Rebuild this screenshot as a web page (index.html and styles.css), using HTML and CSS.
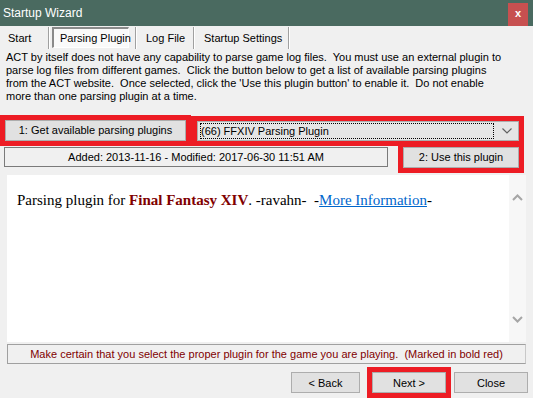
FILE: index.html
```html
<!DOCTYPE html>
<html lang="en">
<head>
  <meta charset="UTF-8" />
  <meta name="viewport" content="width=device-width, initial-scale=1.0" />
  <title>Startup Wizard</title>
  <link rel="stylesheet" href="styles.css">
</head>
<body>
  <div class="window">
    <div class="titlebar">
      <span class="title">Startup Wizard</span>
      <span class="close-btn">x</span>
    </div>

    <!-- TABS -->
    <div class="tabs">
      <div class="tab tab-start">Start</div>
      <div class="tab tab-parsing"><span class="pressed">Parsing Plugin</span></div>
      <div class="tab tab-log">Log File</div>
      <div class="tab tab-settings">Startup Settings</div>
    </div>

    <p class="desc">ACT by itself does not have any capability to parse game log files.&nbsp; You must use an external plugin to<br>
      parse log files from different games.&nbsp; Click the button below to get a list of available parsing plugins<br>
      from the ACT website.&nbsp; Once selected, click the 'Use this plugin button' to enable it.&nbsp; Do not enable<br>
      more than one parsing plugin at a time.</p>

    <div class="row row-get">
      <div class="mark mark-get"><button class="btn btn-get">1: Get available parsing plugins</button></div>
      <div class="mark mark-combo">
        <div class="combo">
          <span class="combo-text">(66) FFXIV Parsing Plugin</span>
          <svg class="combo-arrow" width="10" height="6" viewBox="0 0 10 6"><path d="M0.5 0.5 L5 5 L9.5 0.5" fill="none" stroke="#606060" stroke-width="1.2"/></svg>
        </div>
      </div>
    </div>

    <div class="row row-use">
      <div class="info">Added: 2013-11-16 - Modified: 2017-06-30 11:51 AM</div>
      <div class="mark mark-use"><button class="btn btn-use">2: Use this plugin</button></div>
    </div>

    <!-- PLUGIN INFO -->
    <div class="content">
      <div class="doc">
        Parsing plugin for <b class="game">Final Fantasy XIV</b>. -ravahn- &nbsp;-<a href="#" class="more">More Information</a>-
      </div>
      <div class="scrollbar">
        <svg width="11" height="7" viewBox="0 0 11 7"><path d="M1 6 L5.5 1.5 L10 6" fill="none" stroke="#a6a6a6" stroke-width="2"/></svg>
        <svg width="11" height="7" viewBox="0 0 11 7"><path d="M1 1 L5.5 5.5 L10 1" fill="none" stroke="#a6a6a6" stroke-width="2"/></svg>
      </div>
    </div>

    <div class="note">Make certain that you select the proper plugin for the game you are playing.&nbsp; (Marked in bold red)</div>

    <div class="footer">
      <button class="btn btn-nav">&lt; Back</button>
      <div class="mark mark-next"><button class="btn btn-nav">Next &gt;</button></div>
      <button class="btn btn-nav">Close</button>
    </div>
  </div>
</body>
</html>
```

FILE: styles.css
```css
* {
  box-sizing: border-box;
}

body {
  margin: 0;
  background-color: #f0f0f0;
  font-family: "Liberation Sans", Arial, sans-serif;
  font-size: 11px;
  color: #000;
}

.window {
  width: 533px;
  height: 398px;
  display: flex;
  flex-direction: column;
  overflow: hidden;
}

.titlebar {
  height: 26px;
  background-color: #4a6a60;
  color: #fff;
  display: flex;
  align-items: center;
  justify-content: space-between;
  padding: 0 5px 0 3px;
}

.title {
  font-size: 12px;
}

.close-btn {
  align-self: flex-end;
  width: 20px;
  height: 23px;
  background-color: #c75050;
  color: #fff;
  font-weight: bold;
  font-size: 11px;
  display: flex;
  align-items: center;
  justify-content: center;
  padding-bottom: 3px;
}

/* tabs */
.tabs {
  height: 24px;
  display: flex;
  align-items: center;
  white-space: nowrap;
}

.tab {
  height: 22px;
  display: flex;
  align-items: center;
  padding-left: 8px;
  border-right: 1px solid #a0a0a0;
  box-shadow: 1px 0 0 #fff;
}

.tab-start { width: 49px; }
.tab-parsing { width: 87px; padding-left: 3px; }
.tab-log { width: 58px; padding-left: 10px; }
.tab-settings { width: 95px; padding-left: 10px; }

.pressed {
  height: 21px;
  width: 77px;
  display: flex;
  align-items: center;
  padding-left: 6px;
  background-color: #fafafa;
  border-top: 2px solid #8a8a8a;
  border-left: 2px solid #8a8a8a;
  border-right: 1px solid #fff;
  border-bottom: 1px solid #fff;
}

.desc {
  margin: 1px 0 0;
  padding: 0 6px;
  line-height: 13px;
  height: 64px;
  white-space: nowrap;
}

/* red highlight boxes */
.mark {
  border: 5px solid #ed1c24;
}

.btn {
  font-family: "Liberation Sans", Arial, sans-serif;
  font-size: 11px;
  background-color: #e1e1e1;
  border: 1px solid #adadad;
  color: #000;
  padding: 0;
  height: 21px;
}

.row {
  display: flex;
  align-items: flex-start;
}

.row-get {
  height: 31px;
}

.mark-get {
  width: 191px;
}

.btn-get {
  width: 100%;
}

.mark-combo {
  width: 333px;
  margin-top: 1px;
  border-left-width: 6px;
}

.combo {
  height: 20px;
  background-color: #e5e5e5;
  border: 1px solid #adadad;
  display: flex;
  align-items: center;
  justify-content: space-between;
  padding: 0 6px 0 2px;
}

.combo-text {
  flex: 1;
  border: 1px dotted #000;
  height: 16px;
  line-height: 14px;
  margin-right: 8px;
}

.row-use {
  height: 29px;
}

.info {
  margin: 1px 0 0 4px;
  width: 384px;
  height: 20px;
  border: 1px solid #7a7a7a;
  text-align: center;
  line-height: 18px;
}

.mark-use {
  margin: -4px 0 0 10px;
  width: 126px;
}

.btn-use {
  width: 100%;
}

/* plugin description */
.content {
  margin: 0 7px;
  height: 168px;
  background-color: #fff;
  display: flex;
}

.doc {
  flex: 1;
  padding: 17px 10px;
  font-family: "Liberation Serif", "Times New Roman", serif;
  font-size: 15px;
}

.game {
  color: #800000;
}

.more {
  color: #0066cc;
}

.scrollbar {
  width: 17px;
  background-color: #f7f7f7;
  display: flex;
  flex-direction: column;
  justify-content: space-between;
  align-items: center;
  padding: 19px 0;
}

.note {
  margin: 2px 7px 0;
  height: 20px;
  border: 1px solid #a0a0a0;
  border-right-color: #c8c8c8;
  color: #800000;
  text-align: center;
  line-height: 18px;
}

.footer {
  margin-top: 3px;
  display: flex;
  align-items: center;
  justify-content: flex-end;
  padding-right: 5px;
}

.btn-nav {
  width: 74px;
}

.footer > .btn-nav:first-child {
  width: 69px;
}

.mark-next {
  margin: 0 3px 0 7px;
}
```
